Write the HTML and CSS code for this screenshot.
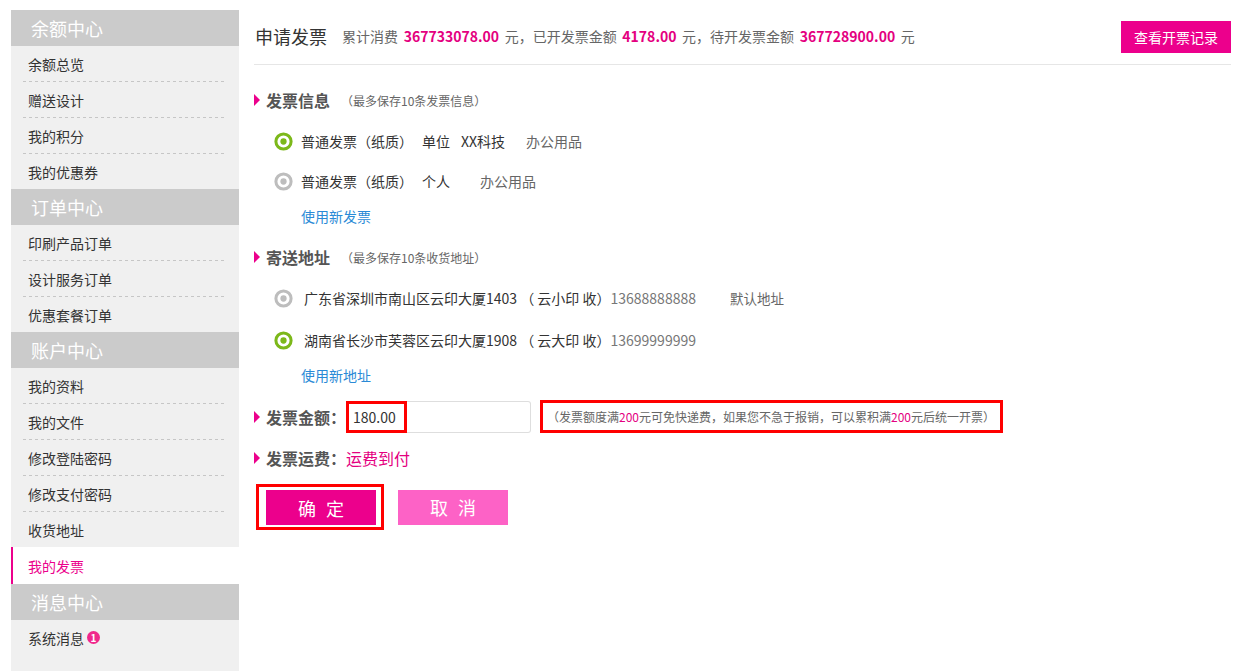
FILE: index.html
```html
<!DOCTYPE html>
<html lang="zh-CN">
<head>
<meta charset="utf-8">
<title>申请发票</title>
<link rel="stylesheet" href="styles.css">
</head>
<body>
<div class="page">
  <aside class="sidebar">
    <div class="group">
      <div class="group-title">余额中心</div>
      <a class="nav-item">余额总览</a>
      <a class="nav-item">赠送设计</a>
      <a class="nav-item">我的积分</a>
      <a class="nav-item">我的优惠券</a>
    </div>
    <div class="group">
      <div class="group-title">订单中心</div>
      <a class="nav-item">印刷产品订单</a>
      <a class="nav-item">设计服务订单</a>
      <a class="nav-item">优惠套餐订单</a>
    </div>
    <div class="group">
      <div class="group-title">账户中心</div>
      <a class="nav-item">我的资料</a>
      <a class="nav-item">我的文件</a>
      <a class="nav-item">修改登陆密码</a>
      <a class="nav-item">修改支付密码</a>
      <a class="nav-item">收货地址</a>
      <a class="nav-item active">我的发票</a>
    </div>
    <div class="group">
      <div class="group-title">消息中心</div>
      <a class="nav-item">系统消息<span class="badge">1</span></a>
    </div>
  </aside>

  <main class="main">
    <header class="top">
      <h1 class="title">申请发票</h1>
      <p class="stats">累计消费 <b>367733078.00</b> 元，已开发票金额 <b>4178.00</b> 元，待开发票金额 <b>367728900.00</b> 元</p>
      <a class="btn-record">查看开票记录</a>
    </header>

    <section class="section">
      <div class="sec-title"><i class="tri"></i><span class="sec-name">发票信息</span><span class="sec-note">（最多保存10条发票信息）</span></div>
      <div class="opt-row first">
        <svg class="radio on" viewBox="0 0 20 20" width="19" height="19"><circle cx="10" cy="10" r="8" fill="none" stroke-width="3.2"/><circle cx="10" cy="10" r="3.3"/></svg>
        <span class="opt-text">普通发票（纸质）</span>
        <span class="inv-a">单位</span><span class="inv-b">XX科技</span><span class="inv-c">办公用品</span>
      </div>
      <div class="opt-row">
        <svg class="radio off" viewBox="0 0 20 20" width="19" height="19"><circle cx="10" cy="10" r="8" fill="none" stroke-width="3.2"/><circle cx="10" cy="10" r="3.3"/></svg>
        <span class="opt-text">普通发票（纸质）</span>
        <span class="inv-a2">个人</span><span class="inv-c">办公用品</span>
      </div>
      <div class="link-row"><a class="link">使用新发票</a></div>
    </section>

    <section class="section sec2">
      <div class="sec-title"><i class="tri"></i><span class="sec-name">寄送地址</span><span class="sec-note">（最多保存10条收货地址）</span></div>
      <div class="addr-row">
        <svg class="radio off" viewBox="0 0 20 20" width="19" height="19"><circle cx="10" cy="10" r="8" fill="none" stroke-width="3.2"/><circle cx="10" cy="10" r="3.3"/></svg>
        <span class="addr-text">广东省深圳市南山区云印大厦1403 （ 云小印 收）</span><span class="phone">13688888888</span><span class="default">默认地址</span>
      </div>
      <div class="addr-row">
        <svg class="radio on" viewBox="0 0 20 20" width="19" height="19"><circle cx="10" cy="10" r="8" fill="none" stroke-width="3.2"/><circle cx="10" cy="10" r="3.3"/></svg>
        <span class="addr-text">湖南省长沙市芙蓉区云印大厦1908 （ 云大印 收）</span><span class="phone">13699999999</span>
      </div>
      <div class="link-row2"><a class="link">使用新地址</a></div>
    </section>

    <div class="amount-row">
      <i class="tri"></i><span class="sec-name">发票金额：</span>
      <div class="amount-input">
        <span class="amount-val">180.00</span>
        <span class="amount-rest"></span>
      </div>
      <div class="amount-tip">（发票额度满<em>200</em>元可免快递费，如果您不急于报销，可以累积满<em>200</em>元后统一开票）</div>
    </div>

    <div class="fee-row">
      <i class="tri"></i><span class="sec-name">发票运费：</span><span class="fee-val">运费到付</span>
    </div>

    <div class="btn-row">
      <div class="confirm-wrap"><a class="btn btn-ok">确定</a></div>
      <a class="btn btn-cancel">取消</a>
    </div>
  </main>
</div>
</body>
</html>
```

FILE: styles.css
```css
* { box-sizing: border-box; }
html, body { margin: 0; padding: 0; background: #fff; }
body {
  font-family: "Microsoft YaHei", "Noto Sans CJK SC", sans-serif;
  color: #333;
  font-size: 14px;
}
a { text-decoration: none; cursor: pointer; }

.page {
  display: flex;
  align-items: flex-start;
  padding-top: 10px;
}

/* sidebar */
.sidebar {
  width: 228px;
  margin-left: 11px;
  min-height: 661px;
  background: #f0f0f0;
}
.group-title {
  height: 36px;
  display: flex;
  align-items: center;
  padding-left: 20px;
  padding-bottom: 1px;
  background: #cbcbcb;
  color: #fff;
  font-size: 18px;
}
.nav-item {
  display: flex;
  align-items: center;
  height: 35px;
  padding: 0 12px 0 17px;
  color: #333;
  font-size: 14px;
}
.nav-item + .nav-item {
  height: 36px;
  padding-top: 1px;
  background-image: repeating-linear-gradient(to right, #c6c6c6 0 3px, transparent 3px 6px);
  background-repeat: no-repeat;
  background-size: 204px 1px;
  background-position: 12px 0;
}
.nav-item.active {
  height: 37px;
  background: #fff;
  border-left: 2px solid #ec008c;
  padding-left: 15px;
  color: #ec008c;
}
.badge {
  display: inline-flex;
  align-items: center;
  justify-content: center;
  width: 13px;
  height: 13px;
  margin-left: 3px;
  border-radius: 50%;
  background: #f0288c;
  color: #fff;
  font-size: 10px;
  font-weight: bold;
  line-height: 1;
}

/* main */
.main {
  width: 977px;
  margin-left: 15px;
}
.top {
  display: flex;
  align-items: center;
  height: 55px;
  padding-bottom: 2px;
  border-bottom: 1px solid #e6e6e6;
  padding-left: 1px;
}
.title {
  margin: 0;
  font-size: 18px;
  font-weight: normal;
  color: #333;
}
.stats {
  margin: 0 0 0 15px;
  font-size: 14px;
  color: #666;
  word-spacing: 2.5px;
}
.stats b {
  color: #e4007f;
  font-weight: bold;
  font-size: 14px;
}
.btn-record {
  margin-left: auto;
  margin-top: 2px;
  width: 110px;
  height: 32px;
  display: flex;
  align-items: center;
  justify-content: center;
  background: #ec008c;
  color: #fff;
  font-size: 14px;
  word-spacing: 0;
}

.section { margin-top: 15px; }
.sec2 { margin-top: 6px; }
.sec-title {
  display: flex;
  align-items: center;
  height: 40px;
}
.tri {
  display: block;
  width: 0;
  height: 0;
  border-left: 6px solid #ec008c;
  border-top: 6px solid transparent;
  border-bottom: 6px solid transparent;
  margin-right: 6px;
}
.sec-name {
  font-size: 16px;
  font-weight: bold;
  color: #555;
}
.sec-note {
  margin-left: 11px;
  font-size: 12px;
  color: #666;
}

.opt-row {
  display: flex;
  align-items: center;
  height: 40px;
  padding-left: 20px;
}
.opt-row.first { margin-top: 1px; }
.radio { flex: none; display: block; }
.radio.on circle:first-child { stroke: #7cb81a; }
.radio.on circle:last-child { fill: #7cb81a; }
.radio.off circle:first-child { stroke: #bdbdbd; }
.radio.off circle:last-child { fill: #bdbdbd; }
.opt-text { margin-left: 8px; width: 121px; color: #333; }
.inv-a { margin-right: 11px; }
.inv-b { margin-right: 21px; }
.inv-a2 { margin-right: 30px; }
.inv-c { color: #666; }

.link-row {
  height: 30px;
  display: flex;
  align-items: center;
  padding-left: 47px;
}
.link-row2 {
  height: 28px;
  display: flex;
  align-items: center;
  padding-left: 47px;
}
.link { color: #2a8ad6; font-size: 14px; }

.addr-row {
  display: flex;
  align-items: center;
  height: 42px;
  padding-left: 20px;
}
.addr-text { margin-left: 11px; color: #333; }
.phone { color: #777; }
.default { margin-left: 34px; color: #666; font-size: 13.5px; }

.amount-row {
  display: flex;
  align-items: center;
  margin-top: 11px;
  height: 33px;
}
.amount-input {
  display: flex;
  width: 185px;
  height: 32px;
}
.amount-val {
  width: 61px;
  height: 32px;
  border: 3px solid #f00;
  display: flex;
  align-items: center;
  padding-left: 4px;
  font-size: 14px;
  color: #333;
}
.amount-rest {
  flex: 1;
  border: 1px solid #dedede;
  border-left: none;
  border-radius: 0 3px 3px 0;
}
.amount-tip {
  margin-left: 9px;
  width: 463px;
  height: 33px;
  border: 3px solid #f00;
  display: flex;
  align-items: center;
  padding-left: 4px;
  font-size: 12px;
  color: #666;
}
.amount-tip em { font-style: normal; color: #e4007f; }

.fee-row {
  display: flex;
  align-items: center;
  height: 30px;
  margin-top: 10px;
}
.fee-val { color: #e4007f; font-size: 16px; }

.btn-row {
  display: flex;
  align-items: center;
  margin-top: 11px;
  padding-left: 2px;
}
.confirm-wrap {
  border: 3px solid #f00;
  padding: 3px 5px 2px 7px;
}
.btn {
  display: flex;
  align-items: center;
  justify-content: center;
  width: 110px;
  height: 35px;
  color: #fff;
  font-size: 18px;
  letter-spacing: 10px;
  text-indent: 10px;
}
.btn-ok { background: #ec008c; }
.btn-cancel { background: #fd62c6; margin-left: 14px; }
```
